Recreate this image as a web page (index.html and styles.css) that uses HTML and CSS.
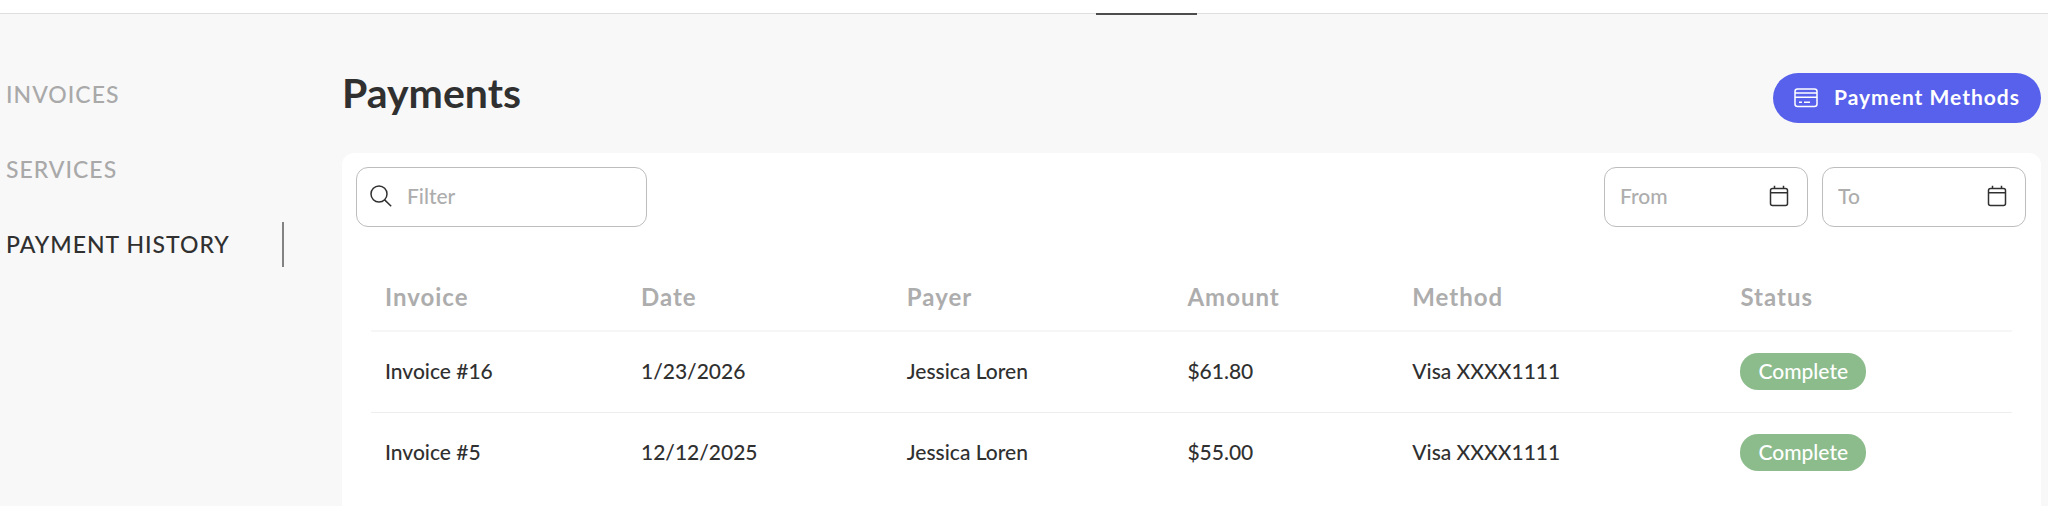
FILE: index.html
```html
<!DOCTYPE html>
<html lang="en">
<head>
<meta charset="utf-8">
<meta name="viewport" content="width=device-width, initial-scale=1">
<title>Payments</title>
<link rel="stylesheet" href="styles.css">
</head>
<body>
<header class="topbar"><span class="topbar-marker"></span></header>
<div class="layout">
  <nav class="sidebar" aria-label="Billing">
    <a class="side-link" href="#invoices">INVOICES</a>
    <a class="side-link" href="#services">SERVICES</a>
    <a class="side-link side-link-active" href="#history" aria-current="page">PAYMENT HISTORY</a>
  </nav>
  <main class="content">
    <div class="page-head">
      <h1 class="page-title">Payments</h1>
      <button class="methods-button" type="button">
        <svg class="card-icon" viewBox="0 0 24 20" aria-hidden="true"><rect x="1" y="1" width="22" height="17.5" rx="2.5"/><path d="M1 5h22M1 9.2h22M5 14.3h3M10 14.3h6"/></svg>
        <span class="methods-label">Payment Methods</span>
      </button>
    </div>
    <section class="panel">
      <div class="toolbar">
        <div class="field field-filter">
          <svg class="search-icon" viewBox="0 0 22 22" aria-hidden="true"><circle cx="9" cy="9" r="8"/><path d="M14.4 14.6l6.8 6.6"/></svg>
          <input class="field-input" type="text" placeholder="Filter" aria-label="Filter">
        </div>
        <div class="dates">
          <div class="field field-date">
            <input class="field-input" type="text" placeholder="From" aria-label="From">
            <button class="date-button" type="button" aria-label="Choose start date"><svg class="calendar-icon" viewBox="0 0 20 22" aria-hidden="true"><rect x="1.5" y="3.5" width="17" height="17" rx="2"/><path d="M1.5 7.8h17M5.5 .8v2.7M14.5 .8v2.7"/></svg></button>
          </div>
          <div class="field field-date">
            <input class="field-input" type="text" placeholder="To" aria-label="To">
            <button class="date-button" type="button" aria-label="Choose end date"><svg class="calendar-icon" viewBox="0 0 20 22" aria-hidden="true"><rect x="1.5" y="3.5" width="17" height="17" rx="2"/><path d="M1.5 7.8h17M5.5 .8v2.7M14.5 .8v2.7"/></svg></button>
          </div>
        </div>
      </div>
      <table class="payments">
        <colgroup><col class="col-invoice"><col class="col-date"><col class="col-payer"><col class="col-amount"><col class="col-method"><col class="col-status"></colgroup>
        <thead>
          <tr><th scope="col">Invoice</th><th scope="col">Date</th><th scope="col">Payer</th><th scope="col">Amount</th><th scope="col">Method</th><th scope="col">Status</th></tr>
        </thead>
        <tbody>
          <tr><td>Invoice #16</td><td>1/23/2026</td><td>Jessica Loren</td><td>$61.80</td><td>Visa XXXX1111</td><td><span class="badge">Complete</span></td></tr>
          <tr><td>Invoice #5</td><td>12/12/2025</td><td>Jessica Loren</td><td>$55.00</td><td>Visa XXXX1111</td><td><span class="badge">Complete</span></td></tr>
        </tbody>
      </table>
    </section>
  </main>
</div>
</body>
</html>
```
FILE: styles.css
```css
* { box-sizing: border-box; }
body {
  margin: 0;
  min-height: 100vh;
  display: flex;
  flex-direction: column;
  background: #f8f8f8;
  color: #303030;
  font: 500 21px/24px Lato, "Liberation Sans", sans-serif;
}
.topbar {
  position: relative;
  height: 14px;
  background: #fff;
  border-bottom: 1px solid #dfdfdf;
}
.topbar-marker {
  position: absolute;
  top: 13px;
  left: 53.5%;
  width: 101px;
  height: 2px;
  background: #4d4d4d;
}
.layout { flex: 1; display: flex; gap: 58px; padding-right: 7px; }
.sidebar {
  flex: 0 0 284px;
  display: flex;
  flex-direction: column;
  gap: 30px;
  padding: 58px 0 0 6px;
}
.side-link {
  height: 45px;
  line-height: 45px;
  font-size: 23px;
  letter-spacing: 1px;
  color: #a9a9a9;
  text-decoration: none;
}
.side-link-active { color: #303030; border-right: 2px solid #828282; }
.content { flex: 1; min-width: 0; display: flex; flex-direction: column; padding-top: 59px; }
.page-head { display: flex; justify-content: space-between; align-items: flex-start; margin-bottom: 30px; }
.page-title { margin: 0; font-size: 41px; line-height: 40px; font-weight: 700; }
.methods-button {
  display: flex;
  align-items: center;
  gap: 16px;
  height: 50px;
  padding: 0 21px;
  border: 0;
  border-radius: 25px;
  background: #5761eb;
  color: #fff;
  font: 700 21px/24px Lato, "Liberation Sans", sans-serif;
  letter-spacing: 1px;
}
.methods-label { padding-bottom: 2px; }
.card-icon, .search-icon, .calendar-icon { flex: none; display: block; fill: none; stroke: currentColor; stroke-width: 1.5; }
.card-icon { width: 24px; height: 20px; }
.search-icon { width: 22px; height: 22px; }
.calendar-icon { width: 20px; height: 22px; }
.panel { flex: 1; padding: 14px 15px 12px 14px; background: #fff; border-radius: 12px; border-bottom-left-radius: 0; border-bottom-right-radius: 0; }
.toolbar { display: flex; justify-content: space-between; }
.dates { display: flex; gap: 14px; }
.field {
  display: flex;
  align-items: center;
  height: 60px;
  padding-bottom: 2px;
  border: 1px solid #bdbdbd;
  border-radius: 12px;
}
.field-filter { width: 291px; padding-left: 13px; padding-right: 13px; gap: 15px; }
.field-date { width: 204px; padding-left: 15px; padding-right: 18px; }
.field-input {
  flex: 1;
  min-width: 0;
  padding: 0;
  border: 0;
  outline: 0;
  background: transparent;
  color: inherit;
  font: inherit;
}
.field-input::placeholder { color: #adadad; opacity: 1; }
.date-button { padding: 0; border: 0; background: none; color: #303030; }
.payments {
  width: calc(100% - 29px);
  margin: 36px 14px 0 15px;
  border-collapse: separate;
  border-spacing: 0;
  table-layout: fixed;
}
.payments th, .payments td { padding: 0 0 0 14px; text-align: left; white-space: nowrap; }
.payments th {
  height: 69px;
  border-bottom: 2px solid #f6f6f6;
  color: #adadad;
  font-size: 24px;
  font-weight: 700;
  letter-spacing: 1px;
}
.payments td { height: 81px; padding-bottom: 2px; border-bottom: 1px solid #eee; }
.payments tr:last-child td { border-bottom-color: transparent; }
.col-invoice { width: 15.6%; }
.col-date { width: 16.2%; }
.col-payer { width: 17.1%; }
.col-amount { width: 13.7%; }
.col-method { width: 20%; }
.col-status { width: 17.4%; }
.badge {
  display: inline-block;
  padding: 0 18px 2px;
  border-radius: 18px;
  background: #8cbc8c;
  color: #fff;
  line-height: 35px;
  font-weight: 500;
}
```
